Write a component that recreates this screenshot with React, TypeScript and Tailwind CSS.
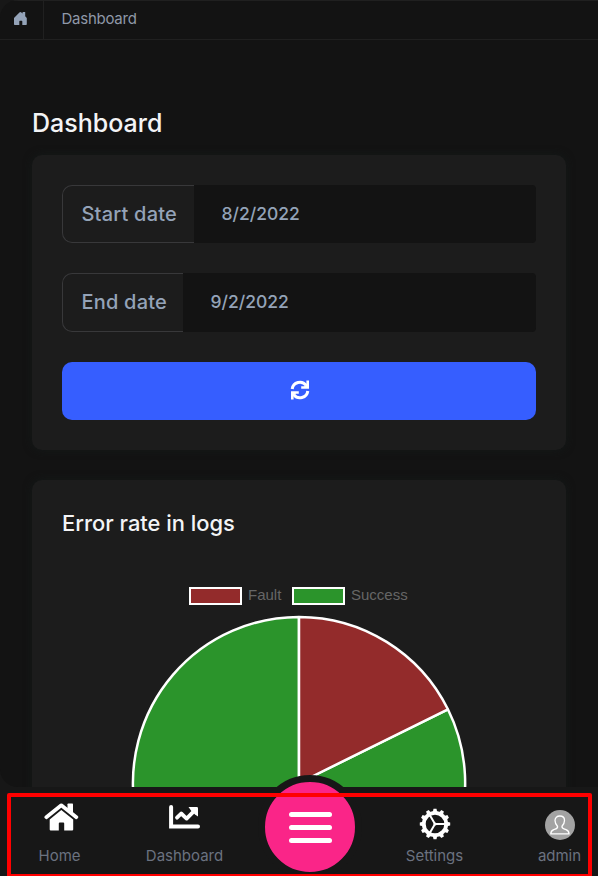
import type { ReactNode } from "react";

function SmallHomeIcon() {
  return (
    <svg width="15" height="15" viewBox="0 0 15 15" fill="#94a3b8">
      <path d="M1 7 6.4 1.4Q7.4.4 8.4 1.4L9.6 2.4V1H12.2V5.2L13.8 7V13.3Q13.8 14 13 14H9.3V10.4Q9.3 9.8 8.7 9.8H6.9Q6.3 9.8 6.3 10.4V14H1.8Q1 14 1 13.3Z" />
    </svg>
  );
}

function RefreshIcon() {
  return (
    <svg width="20" height="20" viewBox="0 0 20 20" fill="none" stroke="white" strokeWidth="3">
      <path d="M2.2 9A7.8 7.8 0 0 1 16.2 5.4" />
      <path d="M17.8 11A7.8 7.8 0 0 1 3.8 14.6" />
      <path d="M17.7.6V7.5H11.2M2.3 19.4V12.5H8.8" strokeWidth="2.6" />
      <path d="M13 7.8 18.2 2.8V7.8ZM7 12.2 1.8 17.2V12.2Z" fill="white" stroke="none" />
    </svg>
  );
}

function HouseIcon() {
  return (
    <svg width="35" height="28" viewBox="0 0 35 28" fill="none">
      <path d="M23.5 1.2Q23.5.5 24.2.5H28.3Q29 .5 29 1.2V10L23.5 5.5Z" fill="white" />
      <path d="M2.3 14.2 17.3 2.3 32.4 14.2" stroke="white" strokeWidth="3.7" strokeLinecap="round" strokeLinejoin="round" />
      <path d="M17.3 7 29.2 16.4V26.4Q29.2 27.5 28.1 27.5H20.2V20.4Q20.2 19.5 19.3 19.5H15.7Q14.8 19.5 14.8 20.4V27.5H6.8Q5.7 27.5 5.7 26.4V16.4Z" fill="white" />
    </svg>
  );
}

function ChartIcon() {
  return (
    <svg width="31" height="24" viewBox="0 0 31 24" fill="none" stroke="white">
      <path d="M2.1 2.1V21.4H29" strokeWidth="4" strokeLinecap="round" strokeLinejoin="miter" />
      <path d="M8 12.7 12.2 8.5 17.6 13.6 24 7.2" strokeWidth="3.8" strokeLinecap="round" strokeLinejoin="round" />
      <path d="M19.5 2H27.8Q29 2 29 3.2V11.5L26 9.4 21.8 5.2Z" fill="white" stroke="none" />
    </svg>
  );
}

const teeth = [0, 30, 60, 90, 120, 150, 180, 210, 240, 270, 300, 330];

function GearIcon() {
  return (
    <svg className="mt-[14px] ml-px" width="32" height="32" viewBox="-16 -16 32 32" fill="none" stroke="white">
      <circle r="11.2" strokeWidth="3.8" />
      {teeth.map((angle) => (
        <path key={angle} d="M-2.2 -12 L-1.5 -15.2 H1.5 L2.2 -12 Z" fill="white" stroke="none" transform={`rotate(${angle})`} />
      ))}
      <path d="M0 0H10.5M0 0-5.4-9.3M0 0-5.4 9.3" strokeWidth="2" />
      <circle r="1.6" fill="white" stroke="none" />
    </svg>
  );
}

function DateField({ label, value, height, labelWidth }: { label: string; value: string; height: string; labelWidth: string }) {
  return (
    <div className={`flex ${height}`}>
      <div className={`flex shrink-0 items-start rounded-l-[10px] border border-r-0 border-[#38383a] pt-[13px] pl-[18.5px] text-[20px] leading-[30px] font-medium whitespace-nowrap tracking-[0.2px] text-[#94a3b8] ${labelWidth}`}>
        {label}
      </div>
      <div className="flex flex-1 items-center rounded-r-[4px] bg-[#131313] pl-[27.5px] text-[17.5px] font-medium text-[#94a3b8]">
        {value}
      </div>
    </div>
  );
}

function NavItem({ label, children, className }: { label: string; children: ReactNode; className: string }) {
  return (
    <div className={`flex flex-col items-center text-[15px] leading-[20px] text-[#6b7280] ${className}`}>
      <div className="flex h-[59px] items-center text-white">{children}</div>
      <span>{label}</span>
    </div>
  );
}

function Pie() {
  return (
    <svg className="mx-auto mt-[10px] block shrink-0" width="336" height="336" viewBox="0 0 336 336">
      <g stroke="#fff" strokeWidth="2.5" strokeLinejoin="bevel">
        <path fill="#2b942b" d="M168 168 L316.9 94.3 A166.1 166.1 0 1 1 168 1.9 Z" />
        <path fill="#932b2b" d="M168 168 L168 1.9 A166.1 166.1 0 0 1 316.9 94.3 Z" />
      </g>
    </svg>
  );
}

export default function App() {
  return (
    <div className="relative flex h-[876px] w-[598px] flex-col overflow-hidden bg-[#171717] font-['Inter',sans-serif]">
      <main className="flex h-[787px] shrink-0 flex-col overflow-hidden rounded-l-[18px] bg-[#131313]">
        <header className="flex h-[40px] shrink-0 border-y border-[#202020] text-[15px] text-[#94a3b8]">
          <div className="flex w-[44px] items-start border-r border-[#202020] pt-[10px] pl-[13px]">
            <SmallHomeIcon />
          </div>
          <div className="pl-[17.5px] text-[15px] leading-[35px] tracking-[-0.25px] text-[#8f98a8]">Dashboard</div>
        </header>
        <div className="flex flex-col px-8">
          <h1 className="mt-[68px] h-[47px] text-[25px] leading-[30px] font-medium text-[#f3f4f6]">Dashboard</h1>
          <section className="flex h-[295px] shrink-0 flex-col rounded-[10px] bg-[#1c1c1c] p-[30px] shadow-[0_0_9px_#141918]">
            <DateField label="Start date" value="8/2/2022" height="h-[58px]" labelWidth="w-[132px]" />
            <div className="h-[30px]" />
            <DateField label="End date" value="9/2/2022" height="h-[59px]" labelWidth="w-[121px]" />
            <button className="mt-[30px] flex h-[58px] items-center justify-center rounded-[10px] bg-[#365eff] pb-[2px] pl-px text-white">
              <RefreshIcon />
            </button>
          </section>
          <section className="mt-[30px] flex h-[520px] shrink-0 flex-col rounded-[10px] bg-[#1c1c1c] p-[30px] pt-[29px] shadow-[0_0_9px_#141918]">
            <h2 className="text-[21.9px] leading-[28px] font-medium text-[#f3f4f6]">Error rate in logs</h2>
            <div className="mt-[49px] ml-[127px] flex h-[19px] items-center font-['Liberation_Sans',sans-serif] text-[15px] text-[#666]">
              <span className="h-[18px] w-[53px] border-[2.5px] border-white bg-[#932b2b]" />
              <span className="ml-[6px] w-[44px]">Fault</span>
              <span className="h-[18px] w-[53px] border-[2.5px] border-white bg-[#2b942b]" />
              <span className="ml-[6px]">Success</span>
            </div>
            <Pie />
          </section>
        </div>
      </main>
      <nav className="flex h-[89px] shrink-0">
        <NavItem label="Home" className="ml-[26px] w-[67px]">
          <div className="ml-[4px]">
            <HouseIcon />
          </div>
        </NavItem>
        <NavItem label="Dashboard" className="ml-[46px] w-[91px]">
          <ChartIcon />
        </NavItem>
        <button className="mt-[-12px] ml-[28px] flex size-[104px] shrink-0 flex-col items-center justify-center gap-[8px] rounded-full border-[7px] border-[#171717] bg-[#fa2588]">
          <span className="h-[5px] w-[43px] rounded-full bg-white" />
          <span className="h-[5px] w-[43px] rounded-full bg-white" />
          <span className="h-[5px] w-[43px] rounded-full bg-white" />
        </button>
        <NavItem label="Settings" className="ml-[37px] w-[71px]">
          <GearIcon />
        </NavItem>
        <NavItem label="admin" className="ml-[60px] w-[59px]">
          <div className="mt-[17px] ml-px flex size-[30px] items-center justify-center rounded-full bg-[#a3a3a3]">
            <svg width="20" height="20" viewBox="0 0 20 20" fill="none" stroke="white" strokeWidth="1.3">
              <path d="M7.5 11.2C6 9.5 5 7.6 5 5.4C5 2.6 7 1 9.8 1S14.5 2.6 14.5 5.4C14.5 7.6 13.5 9.5 12 11.2C11.5 13.8 13.5 13.7 16 14.7C18.5 15.7 19 16.8 19 18.8H.8C.8 16.8 1.3 15.7 3.8 14.7C6.3 13.7 8.2 13.8 7.5 11.2Z" />
            </svg>
          </div>
        </NavItem>
      </nav>
      <div className="pointer-events-none absolute top-[793px] left-[7px] h-[85px] w-[585px] rounded-[2px] border-[4px] border-[#f00]" />
    </div>
  );
}
